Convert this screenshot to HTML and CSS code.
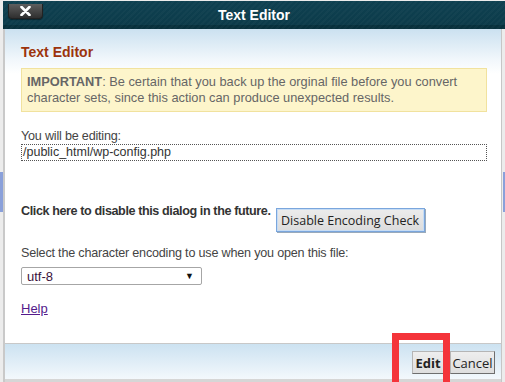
FILE: index.html
```html
<!DOCTYPE html>
<html>
<head>
<title>Text Editor</title>
<link rel="stylesheet" href="styles.css">
</head>
<body>

<div class="page">
  <div class="page-tab left"></div>
  <div class="page-tab right"></div>
</div>

<div class="dialog">
  <div class="titlebar">
    <button class="close" type="button">
      <svg width="11" height="10" viewBox="0 0 11 10"><path d="M1.5 1 L9.5 9 M9.5 1 L1.5 9" stroke="#fff" stroke-width="2.6" stroke-linecap="round"/></svg>
    </button>
    <div class="title">Text Editor</div>
  </div>

  <div class="panel">
    <div class="content">
      <h2>Text Editor</h2>

      <p class="notice"><b>IMPORTANT</b>: Be certain that you back up the orginal file before you convert character sets, since this action can produce unexpected results.</p>

      <label class="field-label" for="file">You will be editing:</label>
      <div class="file" id="file">/public_html/wp-config.php</div>

      <div class="disable-row">
        <span class="disable-text">Click here to disable this dialog in the future.</span>
        <button class="btn-disable" type="button">Disable Encoding Check</button>
      </div>

      <label class="field-label select-label" for="charset">Select the character encoding to use when you open this file:</label>
      <div class="select" id="charset">
        <span>utf-8</span>
        <span class="arrow">&#9660;</span>
      </div>

      <a class="help" href="#">Help</a>
    </div>

    <div class="footer">
      <button class="btn edit" type="button">Edit</button>
      <button class="btn cancel" type="button">Cancel</button>
    </div>
  </div>

  <!-- highlight marker from the screenshot -->
  <div class="marker"></div>
</div>

</body>
</html>
```

FILE: styles.css
```css
/* Reset */
* {
  margin: 0;
  padding: 0;
  box-sizing: border-box;
}

body {
  font-family: 'Liberation Sans', Arial, sans-serif;
  font-size: 13px;
  background-color: #ececec;
  color: #333;
  height: 382px;
  overflow: hidden;
}

/* Page behind the dialog */
.page {
  height: 382px;
}

.page-tab {
  position: absolute;
  top: 172px;
  width: 3px;
  height: 40px;
  background-color: #8aa0da;
}

.page-tab.left {
  left: 0;
}

.page-tab.right {
  right: 0;
  width: 2px;
}

/* Dialog */
.dialog {
  position: absolute;
  top: 1px;
  left: 3px;
  width: 502px;
  height: 381px;
  display: flex;
  flex-direction: column;
}

.titlebar {
  position: relative;
  height: 28px;
  background:
    repeating-linear-gradient(135deg, rgba(255, 255, 255, 0.025) 0 2px, rgba(0, 0, 0, 0) 2px 4px),
    linear-gradient(#0f4151, #0c3b4a 85%, #07303c 86%);
  display: flex;
  align-items: center;
  justify-content: center;
}

.title {
  color: #fff;
  font-weight: bold;
  font-size: 14px;
  margin-top: -1px;
}

.close {
  position: absolute;
  left: 5px;
  top: 3px;
  width: 35px;
  height: 15px;
  border: 1px solid #222;
  border-top: none;
  border-radius: 0 0 4px 4px;
  background: linear-gradient(#5e5e5e, #2f2f2f);
  display: flex;
  align-items: center;
  justify-content: center;
  box-shadow: 0 1px 1px rgba(0, 0, 0, 0.4);
}

.panel {
  flex: 1;
  width: 499px;
  display: flex;
  flex-direction: column;
  border-left: 2px solid #c9c9c9;
  border-right: 1px solid #c6c6c6;
  background-color: #fff;
}

.content {
  flex: 1;
  padding: 15px 16px 0 16px;
  background: linear-gradient(#cbe1f0, #f3f8fc 32px, #fff 45px);
}

h2 {
  font-size: 14px;
  line-height: 16px;
  color: #9c330c;
  margin-bottom: 8px;
}

.notice {
  background-color: #fdf5cb;
  border: 1px solid #f1e29e;
  color: #666;
  font-size: 12.8px;
  line-height: 16px;
  padding: 5px;
  width: 466px;
}

.field-label {
  display: block;
  color: #444;
  font-size: 12.6px;
  letter-spacing: -0.2px;
  line-height: 16px;
  margin-top: 16px;
}

.file {
  width: 466px;
  height: 17px;
  border: 1px dotted #555;
  font-size: 12.5px;
  line-height: 15px;
  color: #333;
  padding-left: 1px;
}

.disable-row {
  display: flex;
  align-items: flex-start;
  margin-top: 42px;
}

.disable-text {
  font-weight: bold;
  font-size: 12.6px;
  letter-spacing: -0.4px;
  line-height: 16px;
  color: #333;
}

.btn-disable {
  margin-top: 5px;
  margin-left: 5px;
  width: 149px;
  height: 24px;
  font-family: 'Open Sans', sans-serif;
  font-size: 12.5px;
  color: #222;
  background: linear-gradient(#ececec, #dcdcdc);
  border: 1px solid #7aa6dd;
  box-shadow: inset 0 0 0 1px #c6dcf4, 1px 1px 0 #9ab;
}

.select-label {
  margin-top: 13px;
}

.select {
  margin-top: 6px;
  width: 181px;
  height: 18px;
  border: 1px solid #a6a6a6;
  border-radius: 2px;
  display: flex;
  justify-content: space-between;
  align-items: center;
  padding: 0 7px 0 5px;
  color: #3c123c;
  font-size: 13px;
}

.arrow {
  font-size: 9px;
  color: #111;
}

.help {
  display: inline-block;
  margin-top: 16px;
  line-height: 16px;
  color: #551a8b;
  text-decoration: underline;
}

/* Footer */
.footer {
  height: 39px;
  border-top: 1px solid #c8c8c8;
  border-bottom: 3px solid #d6d6d6;
  background: linear-gradient(#cce2f1, #f3f8fc);
  display: flex;
  justify-content: flex-end;
  align-items: flex-start;
  gap: 6px;
  padding: 7px 6px 0 0;
}

.btn {
  height: 23px;
  padding: 0;
  font-family: 'Open Sans', sans-serif;
  font-size: 13px;
  color: #222;
  background: linear-gradient(#eeeeee, #dedede);
  border: 1px solid #b5b5b5;
  border-right-color: #6e6e6e;
  border-bottom-color: #6e6e6e;
}

.btn.edit {
  font-weight: bold;
  width: 32px;
}

.btn.cancel {
  width: 45px;
}

/* Red highlight around Edit */
.marker {
  position: absolute;
  left: 389px;
  top: 332px;
  width: 58px;
  height: 56px;
  border: 7px solid #f4343a;
}
```
